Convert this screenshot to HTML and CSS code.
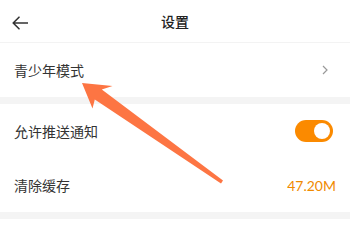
FILE: index.html
```html
<!DOCTYPE html>
<html lang="zh-CN">
  <head>
    <meta charset="UTF-8" />
    <meta name="viewport" content="width=device-width, initial-scale=1.0" />
    <title>设置</title>
    <link rel="stylesheet" href="styles.css">
  </head>
  <body>
    <div class="page">
      <header class="top-bar">
        <svg class="back" width="16" height="14" viewBox="0 0 16 14">
          <path d="M15.5 7H1.5M7 1.2L1.2 7L7 12.8" fill="none" stroke="#333" stroke-width="1.6" stroke-linecap="round" stroke-linejoin="round" />
        </svg>
        <h1 class="title">设置</h1>
      </header>
      <div class="group">
        <div class="row">
          <span class="label">青少年模式</span>
          <svg class="chevron" width="6" height="10" viewBox="0 0 6 10">
            <path d="M1 1L5 5L1 9" fill="none" stroke="#999" stroke-width="1.2" />
          </svg>
        </div>
      </div>
      <div class="gap"></div>
      <div class="group">
        <div class="row">
          <span class="label">允许推送通知</span>
          <span class="switch on"><span class="knob"></span></span>
        </div>
        <div class="row">
          <span class="label">清除缓存</span>
          <span class="value">47.20M</span>
        </div>
      </div>
      <div class="gap"></div>
      <svg class="pointer" width="350" height="234" viewBox="0 0 350 234">
        <polygon points="82,83 112.5,86 101.8,89.6 223,180.5 221,183.5 94.8,99.4 92.5,108.5" fill="#fd7543" />
      </svg>
    </div>
  </body>
</html>
```

FILE: styles.css
```css
* {
  box-sizing: border-box;
}
body {
  margin: 0;
  background-color: #fff;
  font-family: "Noto Sans CJK SC", "Noto Sans", sans-serif;
  color: #333;
}
.page {
  position: relative;
  width: 350px;
  height: 234px;
  overflow: hidden;
}
.top-bar {
  position: relative;
  display: flex;
  align-items: center;
  justify-content: center;
  height: 43px;
  border-bottom: 1px solid #f3f3f3;
}
.back {
  position: absolute;
  left: 12px;
  top: 16px;
}
.title {
  margin: 0;
  font-size: 14px;
  font-weight: 500;
  color: #222;
}
.row {
  display: flex;
  align-items: center;
  justify-content: space-between;
  height: 54px;
  padding: 0 14px;
}
.label {
  font-size: 14px;
  color: #333;
}
.chevron {
  margin-right: 8px;
}
.gap {
  height: 7px;
  background-color: #f4f4f4;
}
.switch {
  position: relative;
  display: inline-block;
  width: 38px;
  height: 22px;
  border-radius: 11px;
  background-color: #fb8a00;
  margin-right: 3px;
}
.knob {
  position: absolute;
  right: 3px;
  top: 3px;
  width: 16px;
  height: 16px;
  border-radius: 50%;
  background-color: #fff;
}
.value {
  font-family: Lato, "Noto Sans", sans-serif;
  font-size: 14px;
  color: #f08a00;
}
.pointer {
  position: absolute;
  left: 0;
  top: 0;
}
```
